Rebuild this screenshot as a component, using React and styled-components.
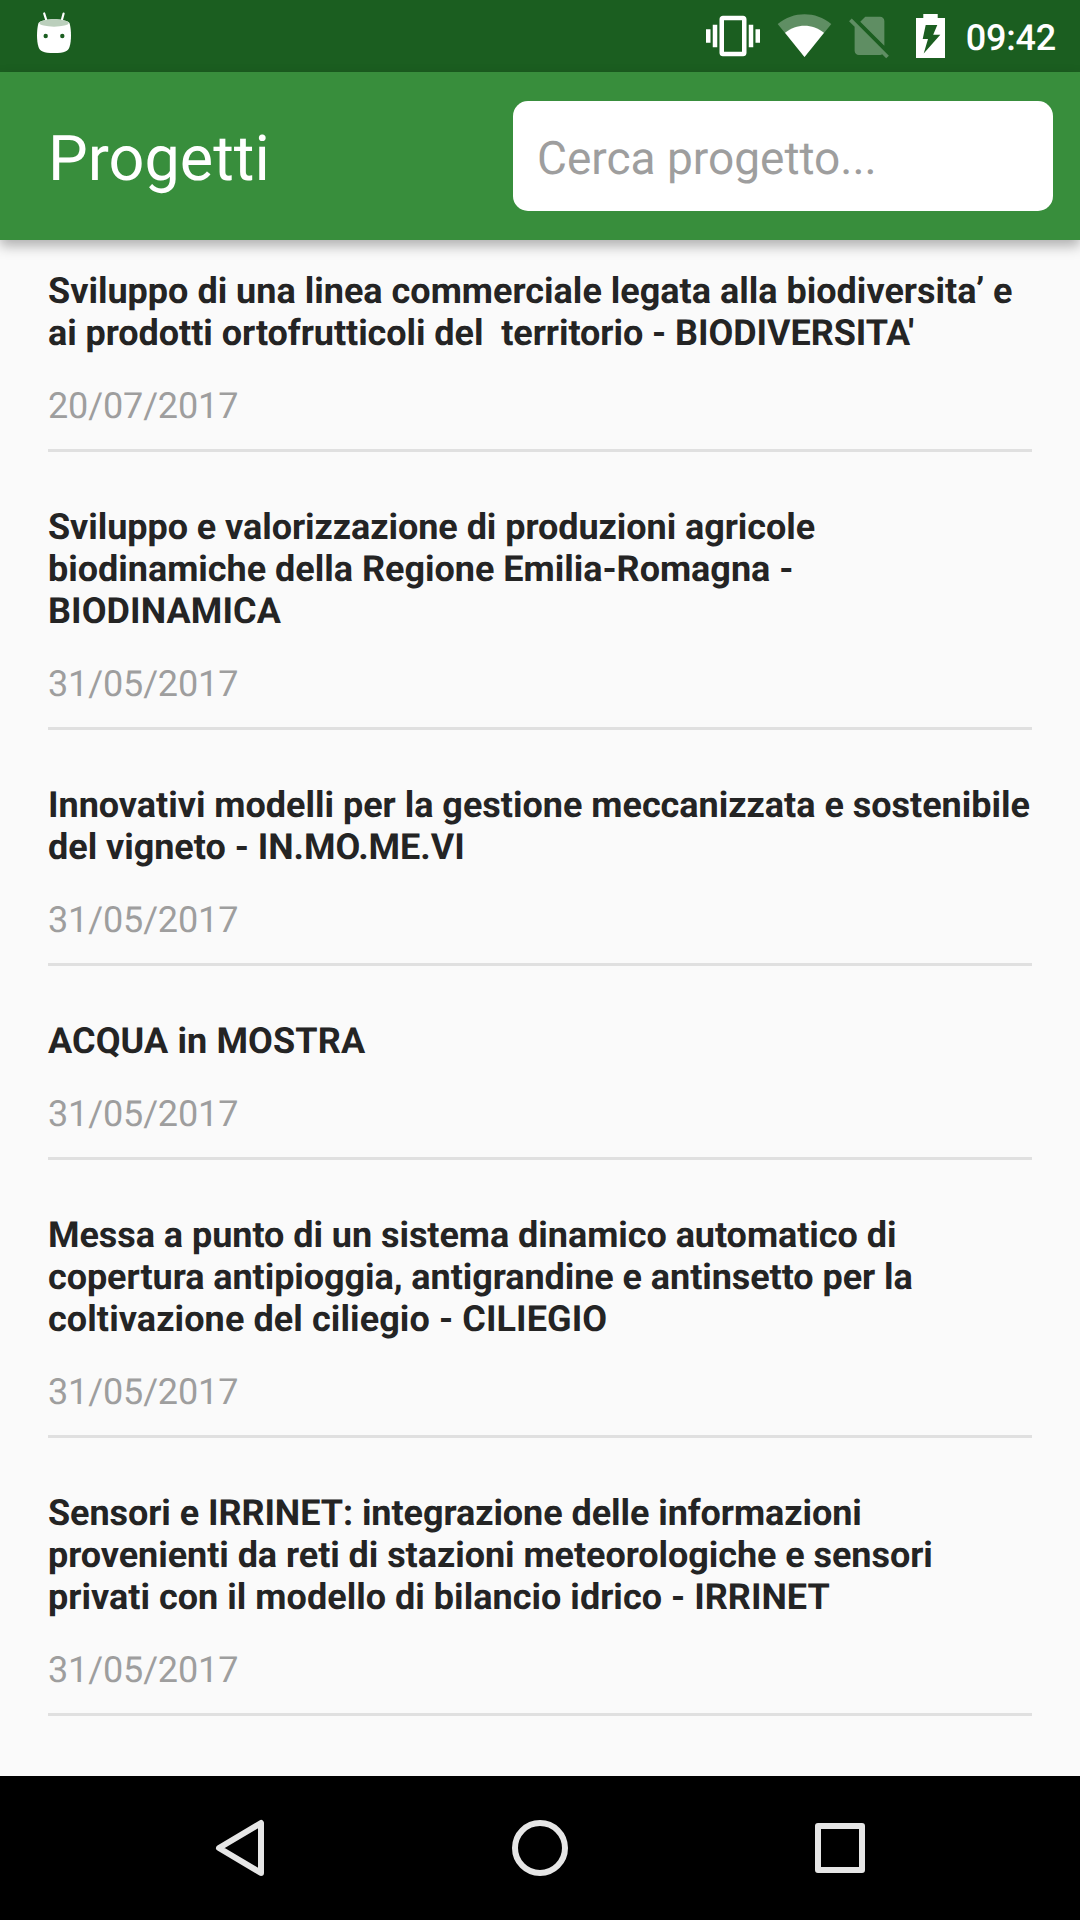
import React from "react";
import styled, { createGlobalStyle } from "styled-components";

const GlobalStyle = createGlobalStyle`
  body {
    margin: 0;
    background-color: #fafafa;
    font-family: Roboto, sans-serif;
    text-rendering: geometricPrecision;
  }
`;

//Styled Components//
const Screen = styled.div`
  display: flex;
  flex-direction: column;
  width: 1080px;
  height: 1920px;
  overflow: hidden;
  background-color: #fafafa;
`;
const StatusBar = styled.div`
  display: flex;
  justify-content: space-between;
  flex: none;
  height: 72px;
  padding: 0 24px 0 36px;
  background-color: #1b5e20;
`;
const StatusIcons = styled.div`
  display: flex;
`;
const StatusIcon = styled.svg`
  display: block;
  width: ${(props) => props.$width}px;
  height: 72px;
  margin-right: ${(props) => props.$gap || 0}px;
  fill: #fff;
`;
const Clock = styled.span`
  color: #fff;
  font-size: 36px;
  font-weight: 500;
  letter-spacing: -0.2px;
  line-height: 76px;
`;
const Header = styled.header`
  display: flex;
  align-items: center;
  justify-content: space-between;
  flex: none;
  height: 168px;
  box-sizing: border-box;
  padding: 0 27px 0 48px;
  background-color: #388e3c;
  box-shadow: 0 6px 12px rgba(0, 0, 0, 0.3);
`;
const Title = styled.h1`
  margin: 8px 0 0;
  color: #fff;
  font-size: 63px;
  font-weight: 400;
  line-height: 70px;
`;
const Search = styled.input`
  width: 540px;
  height: 110px;
  box-sizing: border-box;
  padding: 6px 24px 0;
  border: none;
  border-radius: 15px;
  outline: none;
  background-color: #fff;
  font-family: inherit;
  font-size: 46px;
  text-rendering: inherit;
  &::placeholder {
    color: #9e9e9e;
    opacity: 1;
  }
`;
const List = styled.ul`
  flex: 1;
  list-style: none;
  margin: 0;
  padding: 30px 48px 0;
`;
const Item = styled.li`
  margin-bottom: 54px;
  border-bottom: 3px solid #e0e0e0;
`;
const Name = styled.h2`
  margin: 0 0 31px;
  color: #242424;
  font-size: 36px;
  font-weight: 700;
  line-height: 42px;
  white-space: pre;
`;
const Line = styled.span`
  display: block;
  letter-spacing: ${(props) => props.$tracking}px;
`;
const DateText = styled.p`
  margin: 0;
  padding-bottom: 22px;
  color: #9e9e9e;
  font-size: 36px;
  letter-spacing: -0.13px;
  line-height: 42px;
`;
const NavBar = styled.nav`
  display: flex;
  justify-content: center;
  align-items: center;
  gap: 240px;
  flex: none;
  height: 144px;
  background-color: #000;
`;
const NavIcon = styled.svg`
  width: 60px;
  height: 60px;
  fill: none;
  stroke: #e6e6e6;
  stroke-width: 6;
  stroke-linejoin: round;
`;

//Each line is [text, tracking]//
const projects = [
  {
    lines: [
      ["Sviluppo di una linea commerciale legata alla biodiversita’ e", 0],
      ["ai prodotti ortofrutticoli del  territorio - BIODIVERSITA'", -0.06],
    ],
    date: "20/07/2017",
  },
  {
    lines: [
      ["Sviluppo e valorizzazione di produzioni agricole", -0.06],
      ["biodinamiche della Regione Emilia-Romagna -", -0.02],
      ["BIODINAMICA", 0.1],
    ],
    date: "31/05/2017",
  },
  {
    lines: [
      ["Innovativi modelli per la gestione meccanizzata e sostenibile", -0.02],
      ["del vigneto - IN.MO.ME.VI", -0.04],
    ],
    date: "31/05/2017",
  },
  { lines: [["ACQUA in MOSTRA", 0.12]], date: "31/05/2017" },
  {
    lines: [
      ["Messa a punto di un sistema dinamico automatico di", -0.05],
      ["copertura antipioggia, antigrandine e antinsetto per la", -0.07],
      ["coltivazione del ciliegio - CILIEGIO", 0.09],
    ],
    date: "31/05/2017",
  },
  {
    lines: [
      ["Sensori e IRRINET: integrazione delle informazioni", -0.07],
      ["provenienti da reti di stazioni meteorologiche e sensori", -0.06],
      ["privati con il modello di bilancio idrico - IRRINET", 0.02],
    ],
    date: "31/05/2017",
  },
];

//Status Bar Icons//
const AndroidIcon = () => (
  <StatusIcon $width={36} viewBox="0 0 36 72">
    <path d="M8.200 13.500 L10.600 21 M27.600 13.500 L25.600 21" stroke="#fff" strokeWidth="2.200" strokeLinecap="round" />
    <path d="M2.500 23 C7 18 29 18 33.500 23 C35.500 30 35.500 41 33.500 47 C32 51 29 53 18 53 C7 53 4 51 2.500 47 C.5 41 .5 30 2.500 23 Z" />
    <ellipse cx="18" cy="23" rx="14.700" ry="3.700" fill="#bbcfbc" />
    <circle cx="9.700" cy="36" r="2.200" fill="#1b5e20" />
    <circle cx="26.300" cy="36" r="2.200" fill="#1b5e20" />
  </StatusIcon>
);

const VibrateIcon = () => (
  <StatusIcon $width={54} $gap={17} viewBox="0 0 24 32">
    <path d="M0 19h2v-6H0v6zm3 2h2V11H3v10zm19-8v6h2v-6h-2zm-3 8h2V11h-2v10zM16.500 7h-9C6.670 7 6 7.670 6 8.500v15c0 .83.67 1.500 1.500 1.500h9c.83 0 1.500-.67 1.500-1.500v-15c0-.83-.67-1.500-1.500-1.500zM16 23H8V9h8v14z" />
  </StatusIcon>
);

const WifiIcon = () => (
  <StatusIcon $width={55} $gap={17} viewBox="0 0 55 72">
    <path d="M.7 24 C16.500 11 38.500 11 54.300 24 L27.500 57 Z" opacity=".3" />
    <path d="M8 32.800 C19.500 23.300 35.500 23.300 47 32.800 L27.500 57 Z" />
  </StatusIcon>
);

const NoSimIcon = () => (
  <StatusIcon $width={40} $gap={27} viewBox="0 0 40 72">
    <path
      transform="translate(-5 10.300) scale(2.125)"
      opacity=".3"
      d="M18.990 5c0-1.100-.89-2-1.990-2h-7L7.660 5.340 19 16.680 18.990 5zM3.650 3.880L2.380 5.150 5 7.770V19c0 1.100.9 2 2 2h10.010c.35 0 .67-.1.960-.26l1.880 1.880 1.270-1.270L3.650 3.880z"
    />
  </StatusIcon>
);

const BatteryIcon = () => (
  <StatusIcon $width={29} $gap={21} viewBox="0 0 29 72">
    <path d="M7.300 14 H21.700 V18 H29 V58 H0 V18 H7.300 Z" />
    <path d="M9.700 25 H21.300 L17.200 34.800 H24.300 L7.700 53.500 L12 39 H6.700 Z" fill="#1b5e20" />
  </StatusIcon>
);

const App = () => {
  return (
    <Screen>
      <GlobalStyle />
      <StatusBar>
        <AndroidIcon />
        <StatusIcons>
          <VibrateIcon />
          <WifiIcon />
          <NoSimIcon />
          <BatteryIcon />
          <Clock>09:42</Clock>
        </StatusIcons>
      </StatusBar>
      <Header>
        <Title>Progetti</Title>
        <Search placeholder="Cerca progetto..." />
      </Header>
      <List>
        {projects.map((project) => (
          <Item key={project.lines[0][0]}>
            <Name>
              {project.lines.map(([text, tracking]) => (
                <Line key={text} $tracking={tracking}>
                  {text}
                </Line>
              ))}
            </Name>
            <DateText>{project.date}</DateText>
          </Item>
        ))}
      </List>
      <NavBar>
        <NavIcon viewBox="0 0 60 60">
          <path d="M9 30 L51 5 V55 Z" />
        </NavIcon>
        <NavIcon viewBox="0 0 60 60">
          <circle cx="30" cy="30" r="25" />
        </NavIcon>
        <NavIcon viewBox="0 0 60 60">
          <rect x="8" y="8" width="44" height="44" />
        </NavIcon>
      </NavBar>
    </Screen>
  );
};
export default App;
